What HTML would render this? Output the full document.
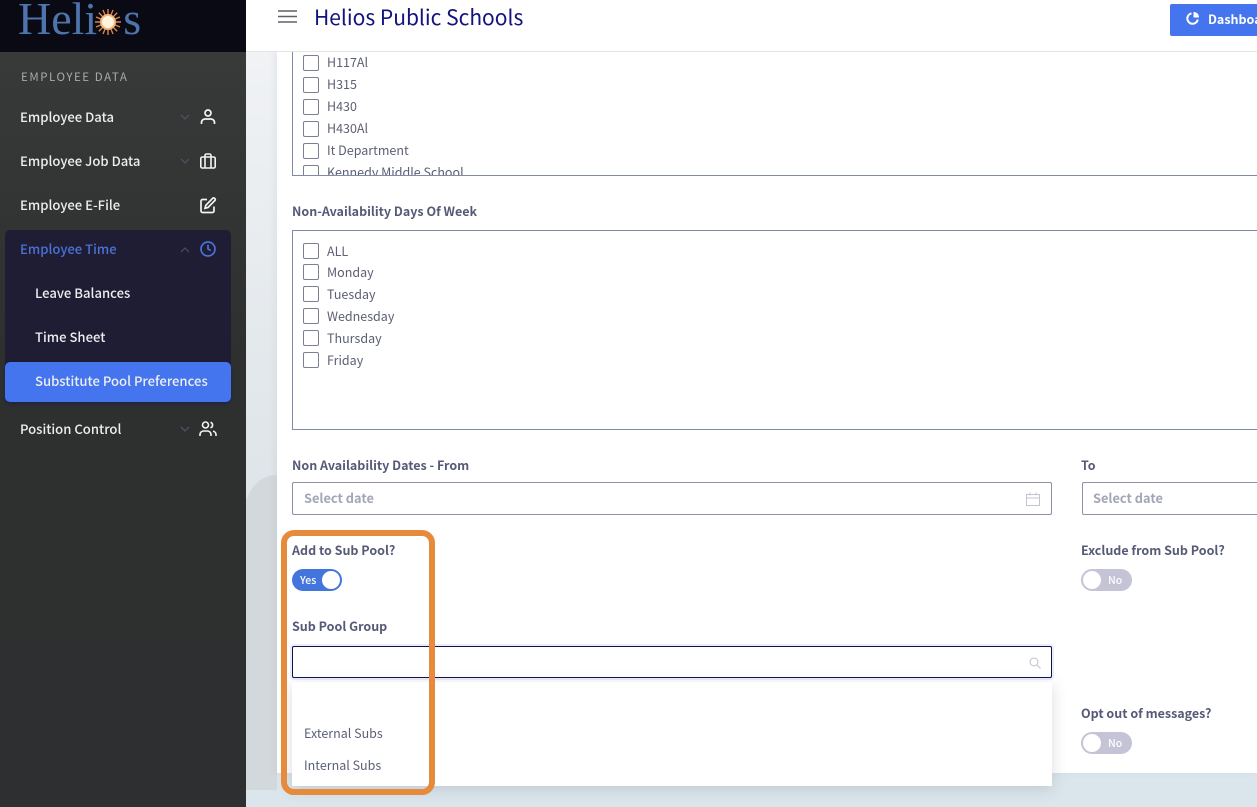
<!DOCTYPE html>
<html lang="en"><head><meta charset="utf-8"><title>Helios Public Schools</title>
<style>
*{box-sizing:border-box}
html,body{margin:0;padding:0;width:1257px;height:807px;overflow:hidden;background:#fff}
body{position:relative;font-family:"Noto Sans CJK JP","Liberation Sans",sans-serif;color:#4f5370}
.a{position:absolute;white-space:nowrap}
.side{left:0;top:52px;width:246px;height:755px;background:linear-gradient(#383a3a,#2e3030 40%,#2d2f30)}
.ni{position:absolute;left:20px;font-size:13.1px;font-weight:500;color:#eceef0;line-height:20px;white-space:nowrap}
.lb{font-size:12.5px;font-weight:700;color:#565a76;line-height:18px}
.cb{position:absolute;left:303px;width:16px;height:16px;border:1px solid #7b7f92;border-radius:2px;background:#fff}
.ct{position:absolute;left:327px;font-size:12.5px;color:#5c6072;line-height:18px;white-space:nowrap}
.inp{position:absolute;border:1px solid #8d90a6;border-radius:2px;background:#fff;height:33px}
.ph{position:absolute;font-size:12.8px;font-weight:700;color:#a3a6b6;line-height:18px;white-space:nowrap}
.tg{position:absolute;width:51px;height:22px;border-radius:11px;background:#c5c3d6}
.tg i{position:absolute;top:2px;width:18px;height:18px;border-radius:50%;background:#fff}
.tg b{position:absolute;top:4px;font-size:10.5px;line-height:16px;font-weight:500;color:#fff}
svg{position:absolute;overflow:visible}
</style></head><body>
<div class="a" style="left:246px;top:52px;width:1011px;height:755px;background:linear-gradient(#f0f2f4,#dfe5e9 55%,#dae6ec)"></div>
<svg style="left:246px;top:470px" width="31" height="320"><path d="M0 30Q10 5 31 5V320H0Z" fill="#d3d8dc"/></svg>
<div class="a" style="left:277px;top:52px;width:980px;height:721px;background:#fff;box-shadow:-3px 0 6px rgba(120,130,140,.08)"></div>

<div class="a side"></div>
<div class="a" style="left:0;top:0;width:246px;height:52px;background:#0a0a15"></div>
<div class="a" style="left:18px;top:-9px;font-family:'Liberation Serif',serif;font-size:46px;line-height:56px;color:#4e74ad;letter-spacing:0">Heli<span style="display:inline-block;width:26px"></span>s</div>
<svg style="left:95px;top:9px" width="26" height="26" viewBox="-13 -13 26 26">
<g stroke="#d9824a" stroke-width="1.4"><path d="M0-13V13M-13 0H13M-9.2-9.2L9.2 9.2M-9.2 9.2L9.2-9.2M-5-12L5 12M5-12L-5 12M-12-5L12 5M-12 5L12-5"/></g>
<circle r="8" fill="#f3b878"/><circle r="6" fill="#fff4dc"/></svg>

<div class="a" style="left:21px;top:68px;font-size:11.5px;line-height:18px;letter-spacing:1.55px;color:#a9abab">EMPLOYEE DATA</div>
<div class="ni" style="top:107px">Employee Data</div>
<div class="ni" style="top:151px">Employee Job Data</div>
<div class="ni" style="top:195px">Employee E-File</div>
<div class="a" style="left:5px;top:230px;width:226px;height:172px;background:#1f1d33;border-radius:5px"></div>
<div class="ni" style="top:239px;color:#4a72d8">Employee Time</div>
<div class="ni" style="top:283px;left:35px">Leave Balances</div>
<div class="ni" style="top:327px;left:35px">Time Sheet</div>
<div class="a" style="left:5px;top:362px;width:226px;height:40px;background:#4475ee;border-radius:5px;box-shadow:0 2px 3px rgba(20,30,80,.6)"></div>
<div class="ni" style="top:371px;left:35px">Substitute Pool Preferences</div>
<div class="ni" style="top:419px">Position Control</div>

<svg style="left:180px;top:114px" width="10" height="6" fill="none" stroke="#4c5060" stroke-width="1.3"><path d="M1 1l4 4 4-4"/></svg>
<svg style="left:180px;top:158px" width="10" height="6" fill="none" stroke="#4c5060" stroke-width="1.3"><path d="M1 1l4 4 4-4"/></svg>
<svg style="left:180px;top:247px" width="10" height="6" fill="none" stroke="#46495f" stroke-width="1.3"><path d="M1 5l4-4 4 4"/></svg>
<svg style="left:180px;top:426px" width="10" height="6" fill="none" stroke="#4c5060" stroke-width="1.3"><path d="M1 1l4 4 4-4"/></svg>

<svg style="left:200px;top:109px" width="16" height="16" fill="none" stroke="#f2f3f3" stroke-width="1.7"><circle cx="8" cy="4" r="3"/><path d="M1.5 15v-1.5a3.5 3.5 0 0 1 3.5-3.5h6a3.5 3.5 0 0 1 3.5 3.500V15"/></svg>
<svg style="left:200px;top:153px" width="16" height="16" fill="none" stroke="#f2f3f3" stroke-width="1.6"><rect x=".8" y="4" width="14.4" height="11" rx="1.5"/><path d="M5 15V2.5A1.5 1.5 0 0 1 6.5 1h3A1.5 1.5 0 0 1 11 2.500V15"/></svg>
<svg style="left:200px;top:197px" width="16" height="16" fill="none" stroke="#f2f3f3" stroke-width="1.7"><path d="M7 2.500H2.500A1.500 1.500 0 0 0 1 4v10a1.500 1.500 0 0 0 1.500 1.500h10A1.500 1.500 0 0 0 14 14V9.500"/><path d="M12.800 1.200a1.600 1.600 0 0 1 2.200 2.200L8 10.500l-3 .8.800-3z"/></svg>
<svg style="left:200px;top:241px" width="16" height="16" fill="none" stroke="#4a72d8" stroke-width="1.700"><circle cx="8" cy="8" r="7"/><path d="M8 3.800V8l2.800 1.500"/></svg>
<svg style="left:199px;top:421px" width="18" height="16" fill="none" stroke="#f2f3f3" stroke-width="1.600"><circle cx="6.500" cy="4" r="3"/><path d="M1 15v-1.500A3.500 3.500 0 0 1 4.500 10h4a3.500 3.500 0 0 1 3.500 3.500V15"/><path d="M11.500 1.200a3 3 0 0 1 0 5.700M14 10.200a3.500 3.500 0 0 1 3 3.300V15"/></svg>

<div class="a" style="left:246px;top:0;width:1011px;height:52px;background:#fff;border-bottom:1px solid #e3e4e6"></div>
<svg style="left:278px;top:10px" width="19" height="13" stroke="#5d6066" stroke-width="1.600"><path d="M0 1h19M0 6.500h19M0 12h19"/></svg>
<div class="a" style="left:314px;top:0;font-size:21px;line-height:34px;color:#12137c">Helios Public Schools</div>
<div class="a" style="left:1170px;top:4px;width:100px;height:32px;background:#4475ee;border-radius:2px"></div>
<svg style="left:1186px;top:11px" width="14" height="14" fill="none" stroke="#fff" stroke-width="2"><path d="M5.500 2.300A5.300 5.300 0 1 0 11.800 8.500"/><path d="M8 1.500V6h4.500A4.500 4.500 0 0 0 8 1.500z" fill="#fff" stroke-width="1"/></svg>
<div class="a" style="left:1208px;top:10px;font-size:12.5px;line-height:18px;font-weight:700;color:#fff;width:49px;overflow:hidden">Dashboard</div>

<div class="a" style="left:292px;top:52px;width:965px;height:124px;border:1px solid #7f8aa6;border-top:0;border-right:0;overflow:hidden;background:#fff">
<div class="cb" style="left:10px;top:3px"></div><div class="ct" style="left:34px;top:1px">H117Al</div>
<div class="cb" style="left:10px;top:25px"></div><div class="ct" style="left:34px;top:23px">H315</div>
<div class="cb" style="left:10px;top:47px"></div><div class="ct" style="left:34px;top:45px">H430</div>
<div class="cb" style="left:10px;top:69px"></div><div class="ct" style="left:34px;top:67px">H430Al</div>
<div class="cb" style="left:10px;top:91px"></div><div class="ct" style="left:34px;top:89px">It Department</div>
<div class="cb" style="left:10px;top:113px"></div><div class="ct" style="left:34px;top:111px">Kennedy Middle School</div>
</div>

<div class="a lb" style="left:292px;top:202px">Non-Availability Days Of Week</div>
<div class="a" style="left:292px;top:230px;width:975px;height:200px;border:1px solid #7f8aa6;background:#fff"></div>
<div class="cb" style="top:243px"></div><div class="ct" style="top:242px">ALL</div>
<div class="cb" style="top:264px"></div><div class="ct" style="top:263px">Monday</div>
<div class="cb" style="top:286px"></div><div class="ct" style="top:285px">Tuesday</div>
<div class="cb" style="top:308px"></div><div class="ct" style="top:307px">Wednesday</div>
<div class="cb" style="top:330px"></div><div class="ct" style="top:329px">Thursday</div>
<div class="cb" style="top:352px"></div><div class="ct" style="top:351px">Friday</div>

<div class="a lb" style="left:292px;top:456px">Non Availability Dates - From</div>
<div class="a lb" style="left:1081px;top:456px">To</div>
<div class="inp" style="left:292px;top:482px;width:760px"></div>
<div class="ph" style="left:304px;top:489px">Select date</div>
<svg style="left:1026px;top:492px" width="14" height="14" fill="none" stroke="#c2c4d0"><rect x=".5" y="2.500" width="13" height="11"/><path d="M.5 6h13M4 .5v3M10 .5v3"/></svg>
<div class="inp" style="left:1082px;top:482px;width:190px"></div>
<div class="ph" style="left:1093px;top:489px">Select date</div>

<div class="a lb" style="left:292px;top:541px">Add to Sub Pool?</div>
<div class="tg" style="left:292px;top:569px;width:50px;background:#4475dc"><b style="left:8px">Yes</b><i style="left:30px"></i></div>
<div class="a lb" style="left:1081px;top:541px">Exclude from Sub Pool?</div>
<div class="tg" style="left:1081px;top:569px"><i style="left:2px"></i><b style="left:27px">No</b></div>
<div class="a lb" style="left:292px;top:617px">Sub Pool Group</div>
<div class="a" style="left:292px;top:646px;width:760px;height:32px;border:1px solid #12124f;border-radius:2px;background:#fff;box-shadow:0 0 0 2px #e9edfa"></div>
<svg style="left:1029px;top:657px" width="12" height="12" fill="none" stroke="#bfc1cc"><circle cx="5" cy="5" r="4"/><path d="M8 8l3.500 3.500"/></svg>
<div class="a" style="left:292px;top:682px;width:760px;height:104px;background:#fff;box-shadow:0 3px 14px rgba(90,95,120,.22)"></div>
<div class="ct" style="left:304px;top:724px;color:#5b5f76">External Subs</div>
<div class="ct" style="left:304px;top:756px;color:#5b5f76">Internal Subs</div>
<div class="a lb" style="left:1081px;top:704px">Opt out of messages?</div>
<div class="tg" style="left:1081px;top:732px"><i style="left:2px"></i><b style="left:27px">No</b></div>

<div class="a" style="left:281px;top:530px;width:154px;height:265px;border:6px solid #e68a3c;border-radius:13px"></div>
</body></html>
